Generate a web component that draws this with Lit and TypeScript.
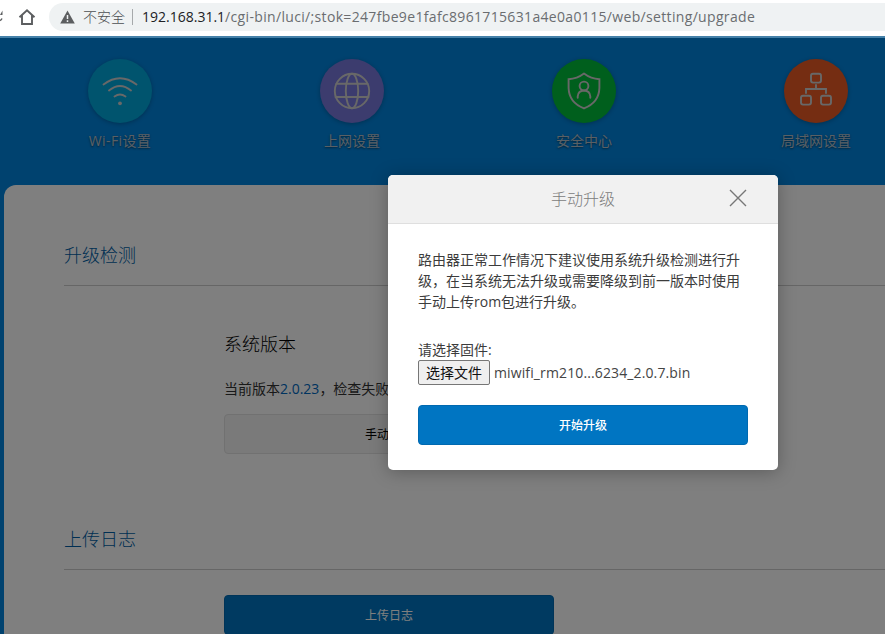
import { LitElement, html, css, svg } from "lit";
import { customElement } from "lit/decorators.js";

const navItems = [
  {
    label: "Wi-Fi设置",
    tone: "cyan",
    icon: svg`<path d="M15.5 25.5Q32 13 48.500 25.500M21 31.500Q32 22.500 43 31.500M26.500 37.500Q32 33.500 37.500 37.500"/><circle class="dot" cx="32" cy="44.300" r="1.900"/>`,
  },
  {
    label: "上网设置",
    tone: "violet",
    icon: svg`<circle cx="32" cy="32" r="17.200"/><ellipse cx="32" cy="32" rx="6.200" ry="17.200"/><path d="M16.500 24.800H47.500M15.500 38H48.500"/>`,
  },
  {
    label: "安全中心",
    tone: "green",
    icon: svg`<path d="M32 14.600Q39 20 47.400 20.200V29Q47 43.500 32 49.400Q17 43.500 16.600 29V20.200Q25 20 32 14.600Z"/><circle cx="32" cy="27" r="4.400"/><path d="M25.700 38.800V37.300Q26.200 31.800 32 31.500Q37.800 31.800 38.300 37.300V38.800"/>`,
  },
  {
    label: "局域网设置",
    tone: "orange",
    icon: svg`<rect x="27" y="14.800" width="10" height="8.800" rx="2"/><rect x="17" y="36.800" width="10" height="8.800" rx="2"/><rect x="37" y="36.800" width="10" height="8.800" rx="2"/><path d="M32 26V30M22 34V30H42V34"/>`,
  },
];

@customElement("browser-bar")
class BrowserBar extends LitElement {
  static styles = css`
    :host { display: flex; align-items: flex-start; box-sizing: border-box; height: 38px; background: #fff; border-bottom: 2px solid #4581a9; overflow: hidden; }
    .reload { width: 3px; height: 34px; flex: none; }
    .home { width: 18px; height: 34px; margin-left: 15px; flex: none; }
    .address { flex: 1; display: flex; align-items: center; box-sizing: border-box; height: 28px; margin: 3px 0 0 13px; padding-left: 11px; background: #eff2f3; border-radius: 14px 0 0 14px; white-space: nowrap; font: 14px/28px "Open Sans", "Noto Sans CJK SC", sans-serif; color: #6a6d70; }
    .warn { width: 15px; height: 14px; flex: none; }
    .notice { margin-left: 8px; width: 43px; font-weight: 300; color: #4c4f52; }
    .rule { width: 1px; height: 16px; background: #a6a9ab; margin: 0 9px 0 6px; }
    .url { letter-spacing: 0.335px; }
    .host { color: #202124; letter-spacing: 0; }
  `;
  render() {
    return html`
      <svg class="reload" viewBox="0 0 3 34"><path d="M0 15H2.500V10.500Z" fill="#5c5e60" /><path d="M0 20.500Q1.300 20 2 18.500" fill="none" stroke="#5c5e60" stroke-width="1.500" /></svg>
      <svg class="home" viewBox="0 0 18 34"><path d="M1.500 17.300L9 10.300L16.500 17.300M4 15.500V24H14V15.500" fill="none" stroke="#5c5e60" stroke-width="1.900" /></svg>
      <div class="address">
        <svg class="warn" viewBox="0 0 15 14"><path d="M7.500 .5L14.800 13.500H.2Z" fill="#5c5e60" /><path d="M7.500 5V9M7.500 10.300V12" stroke="#eff2f3" stroke-width="1.500" /></svg>
        <span class="notice">不安全</span><span class="rule"></span>
        <span class="url"><span class="host">192.168.31.1</span>/cgi-bin/luci/;stok=247fbe9e1fafc8961715631a4e0a0115/web/setting/upgrade</span>
      </div>`;
  }
}

@customElement("upgrade-dialog")
class UpgradeDialog extends LitElement {
  static styles = css`
    :host { display: block; box-sizing: border-box; width: 390px; height: 295px; background: #fff; border-radius: 5px; overflow: hidden; box-shadow: 0 2px 18px rgba(0, 0, 0, 0.28); color: #333; }
    .head { display: grid; grid-template-columns: 80px 1fr 80px; align-items: center; box-sizing: border-box; height: 49px; background: #f1f1f1; border-bottom: 1px solid #dfdfdf; text-align: center; font-size: 16px; color: #7c7c7c; font-weight: 300; }
    .title { grid-column: 2; }
    .close { width: 18px; height: 18px; justify-self: center; margin-bottom: 2px; }
    .body { padding: 25px 30px 0; font-size: 14px; }
    .text { width: 330px; line-height: 21px; }
    .text, .label { color: #3c3c3c; }
    .label { margin-top: 27px; line-height: 21px; }
    .file { display: flex; align-items: center; height: 25px; }
    .pick { box-sizing: border-box; width: 72px; height: 25px; padding: 0; border: 1px solid #767676; border-radius: 2px; background: #efefef; color: #111; font: inherit; line-height: 23px; }
    .name { margin-left: 4px; white-space: nowrap; letter-spacing: 0.12px; color: #444; }
    .start { display: block; box-sizing: border-box; width: 330px; height: 40px; margin-top: 20px; padding: 0; border: 1px solid #0069b0; border-radius: 4px; background: #0075c2; color: #fff; font: inherit; font-size: 12px; font-weight: 500; }
  `;
  render() {
    return html`
      <div class="head">
        <span class="title">手动升级</span>
        <svg class="close" viewBox="0 0 18 18"><path d="M1 1L17 17M17 1L1 17" stroke="#777" stroke-width="1.400" /></svg>
      </div>
      <div class="body">
        <div class="text">路由器正常工作情况下建议使用系统升级检测进行升<br />级，在当系统无法升级或需要降级到前一版本时使用<br />手动上传rom包进行升级。</div>
        <div class="label">请选择固件:</div>
        <div class="file"><button class="pick">选择文件</button><span class="name">miwifi_rm210...6234_2.0.7.bin</span></div>
        <button class="start">开始升级</button>
      </div>`;
  }
}

@customElement("app-root")
class AppRoot extends LitElement {
  static styles = css`
    :host { display: flex; flex-direction: column; width: 885px; height: 634px; overflow: hidden; font: 14px/21px "Open Sans", "Noto Sans CJK SC", sans-serif; }
    .page { position: relative; flex: 1; background: #0084de; overflow: hidden; }
    .nav { display: grid; grid-template-columns: repeat(4, 232px); margin-left: 4px; padding-top: 21px; height: 126px; }
    .item { display: flex; flex-direction: column; align-items: center; color: #b4c0cb; text-shadow: 0 1px 2px rgba(0, 0, 0, 0.5); }
    .item:first-child { letter-spacing: 0.4px; }
    .disc { width: 64px; height: 64px; border-radius: 50%; box-shadow: 0 1px 4px rgba(0, 0, 0, 0.25); margin-bottom: 7px; }
    .disc svg { display: block; fill: none; stroke: #d0d0d0; stroke-width: 1.9; stroke-linecap: round; }
    .disc .dot { fill: #d0d0d0; stroke: none; }
    .cyan { background: #00a8dc; }
    .violet { background: #7878dc; }
    .green { background: #00be3a; }
    .orange { background: #ea5a24; }
    .panel { margin-left: 4px; height: 480px; background: #fff; border-radius: 12px 0 0 0; box-sizing: border-box; padding: 57px 0 0 60px; }
    .section { font-size: 18px; line-height: 26px; height: 43px; border-bottom: 1px solid #cdcdcd; color: #005ea6; font-weight: 300; }
    .content { padding-left: 160px; color: #333; }
    .upgrade { height: 240px; box-sizing: border-box; padding-top: 44px; }
    .subtitle { font-size: 18px; line-height: 28px; font-weight: 300; color: #000; }
    .status { margin-top: 20px; line-height: 21px; }
    .version { color: #0068c0; }
    .btn { box-sizing: border-box; display: block; width: 330px; height: 40px; border-radius: 4px; padding: 0; font: inherit; font-size: 12px; }
    .manual { margin-top: 15px; border: 1px solid #e2e2e2; background: #f5f5f5; color: #000; }
    .log { padding-top: 25px; }
    .upload { border: 1px solid #0069b0; background: #0075c2; color: #fff; }
    .scrim { position: absolute; inset: 0; background: rgba(0, 0, 0, 0.5); }
    upgrade-dialog { position: absolute; left: 388px; top: 137px; }
  `;
  render() {
    return html`
      <browser-bar></browser-bar>
      <div class="page">
        <div class="nav">
          ${navItems.map((n) => html`<div class="item"><div class="disc ${n.tone}"><svg width="64" height="64" viewBox="0 0 64 64">${n.icon}</svg></div><span>${n.label}</span></div>`)}
        </div>
        <div class="panel">
          <div class="section">升级检测</div>
          <div class="content upgrade">
            <div class="subtitle">系统版本</div>
            <div class="status">当前版本<span class="version">2.0.23</span>，检查失败</div>
            <button class="btn manual">手动升级</button>
          </div>
          <div class="section">上传日志</div>
          <div class="content log"><button class="btn upload">上传日志</button></div>
        </div>
        <div class="scrim"></div>
        <upgrade-dialog></upgrade-dialog>
      </div>`;
  }
}
